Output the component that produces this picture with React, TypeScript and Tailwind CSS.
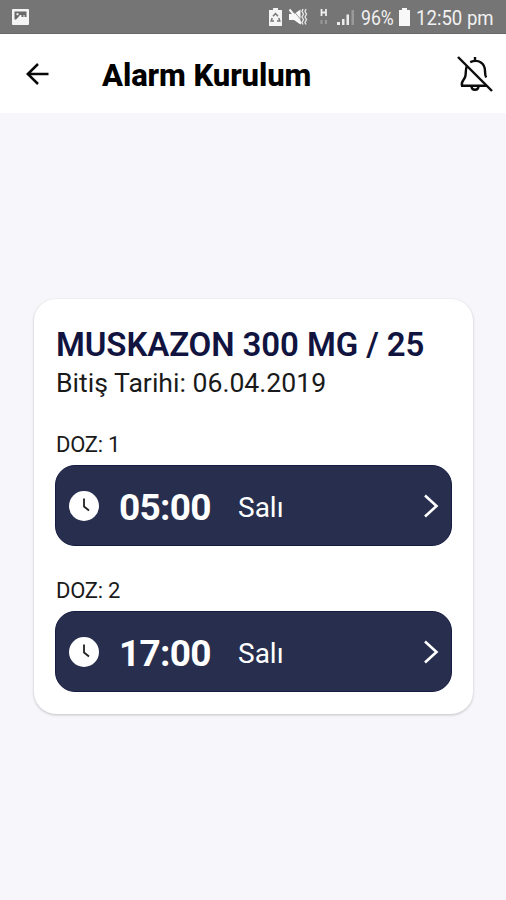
function StatusBar() {
  return (
    <div className="flex h-[34px] shrink-0 items-center border-b border-[#686868] bg-[#757575] text-[#f1f1f1]">
      <svg className="ml-3 h-4 w-[18px]" viewBox="0 0 18 16">
        <rect width="17" height="16" rx="1" fill="#f4f4f4" />
        <path d="M2.500 2.500h12v5.500h-2V6h-1v2H9.500V6H8L6 8.500l-2 2H2.500z" fill="#686868" />
        <path d="M4.500 4.200h2v2h-2z" fill="#f4f4f4" />
      </svg>
      <svg className="ml-[239px] h-[18px] w-[13px]" viewBox="0 0 13 18">
        <path d="M4 0h5v2h4v16H0V2h4z" fill="#f4f4f4" />
        <path d="M4 8.200L6.500 5.500 9 8.200M3.200 10l-1 3H5M9.800 10l1 3H8" fill="none" stroke="#777" strokeWidth="1.500" />
      </svg>
      <svg className="ml-[6px] h-[18px] w-5" viewBox="0 0 20 18">
        <path d="M1 6h5L12.500 1.500v15L6 12H1z" fill="#f8f8f8" />
        <path d="M1.500 1.500l11.500 14" stroke="#f8f8f8" strokeWidth="2" />
        <path d="M4 1l10 12" stroke="#757575" strokeWidth="0.700" />
        <path d="M15 1l-1 2.500 1.500 2.500-1.500 3 1.500 2.500-1.500 3 1 2M18 1l-1 2.500 1.500 2.500-1.500 3 1.500 2.500-1.500 3 1 2" fill="none" stroke="#e5e5e5" strokeWidth="1.400" />
      </svg>
      <svg className="ml-3 h-[18px] w-2" viewBox="0 0 8 18">
        <path d="M1.500 1v7M6 1v7M1.500 4.500H6" stroke="#eee" strokeWidth="1.800" fill="none" />
        <path d="M1.500 12v4M6 12v4" stroke="#999" strokeWidth="2" />
      </svg>
      <svg className="ml-[9px] h-[18px] w-[18px]" viewBox="0 0 18 18">
        <path d="M0 14h3v3H0zM5 11h2.500v6H5zM9.500 6.500H12V17H9.500z" fill="#ededed" />
        <path d="M14.500 2H17v15h-2.500z" fill="#9a9a9a" />
      </svg>
      <span className="mt-1 ml-[6px] w-[35px] whitespace-nowrap text-[21px] leading-none">
        <span className="inline-block origin-left scale-x-[0.84]">96%</span>
      </span>
      <svg className="ml-[3px] h-[18px] w-[11px]" viewBox="0 0 11 18">
        <path d="M3 0h5v2h3v16H0V2h3z" fill="#f8f8f8" />
      </svg>
      <span className="mt-1 ml-[6px] whitespace-nowrap text-[21px] leading-none">
        <span className="inline-block origin-left scale-x-[0.885]">12:50 pm</span>
      </span>
    </div>
  );
}

function Header() {
  return (
    <header className="flex h-[79px] shrink-0 items-center bg-white">
      <svg className="ml-[26px] h-[22px] w-[23px]" viewBox="0 0 23 22" fill="none" stroke="#080808" strokeWidth="2.500">
        <path d="M12 1L1.800 11 12 21M2 11h20.500" />
      </svg>
      <h1 className="mt-[3px] ml-[53px] w-[355px] whitespace-nowrap text-[31px] leading-none font-extrabold tracking-[-0.08px] text-black">Alarm Kurulum</h1>
      <svg className="h-9 w-9 shrink-0" viewBox="0 0 36 36" fill="none" stroke="#0b0b0b" strokeWidth="2.400">
        <path d="M1 1l34 34" />
        <path d="M18 1v4M13.200 6.200C22 2.500 28 7.500 28 15c0 3 .3 5 1.200 6.500" />
        <path d="M9.700 10.500C8.500 13 9 16.500 8.500 19.500 8 24 3.500 25 5 29.700h25" />
        <path d="M14.500 30c0 5 7 5 7 0" />
      </svg>
    </header>
  );
}

function Dose({ index, time, day }: { index: number; time: string; day: string }) {
  return (
    <section>
      <p className="h-[33px] pl-px text-[22px] leading-[26px] tracking-[-0.25px] text-[#1a1a1a]">DOZ: {index}</p>
      <button className="flex h-[81px] w-[397px] items-center rounded-[20px] border border-[#161b42] bg-[#282f4e] text-white">
        <svg className="ml-[13px] h-[30px] w-[30px]" viewBox="0 0 30 30">
          <circle cx="15" cy="15" r="15" fill="white" />
          <path d="M15 7.500V15.500l5 4" fill="none" stroke="#222" strokeWidth="1.800" />
        </svg>
        <span className="mt-[4px] ml-5 w-[119px] text-left text-[37px] leading-none font-bold tracking-[-0.7px]">{time}</span>
        <span className="mt-[4px] text-[28px] leading-none">{day}</span>
        <svg className="mt-px mr-[12px] ml-auto h-6 w-[15px]" viewBox="0 0 15 24" fill="none" stroke="white" strokeWidth="2.600">
          <path d="M1 1.500l11.500 10.500L1 22.500" />
        </svg>
      </button>
    </section>
  );
}

export default function App() {
  return (
    <div className="flex h-[900px] w-[506px] flex-col overflow-hidden bg-[#f6f6fb] font-[Roboto,sans-serif]">
      <StatusBar />
      <Header />
      <main className="flex-1 pt-[186px] pl-[34px]">
        <article className="h-[415px] w-[439px] rounded-[22px] bg-white pt-[26px] pl-[21px] shadow-[0_1px_3px_rgba(0,0,0,0.22)]">
          <h2 className="h-[39px] pl-px whitespace-nowrap text-[33px] leading-[39px] font-semibold tracking-[-0.1px] text-[#11143f]">MUSKAZON 300 MG / 25</h2>
          <p className="h-[68px] pl-px text-[26.600px] leading-[38px] text-[#1a1a1a]">Bitiş Tarihi: 06.04.2019</p>
          <div className="flex flex-col gap-8">
            <Dose index={1} time="05:00" day="Salı" />
            <Dose index={2} time="17:00" day="Salı" />
          </div>
        </article>
      </main>
    </div>
  );
}
